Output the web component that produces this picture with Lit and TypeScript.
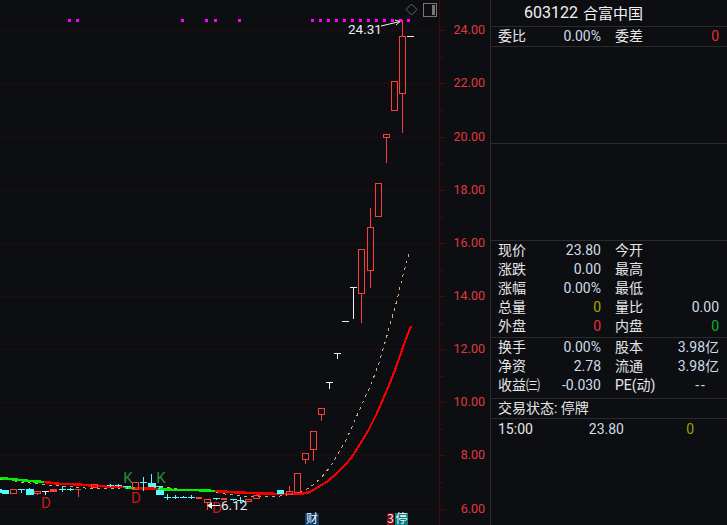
import { LitElement, html, svg, css } from "lit";
import { customElement } from "lit/decorators.js";

type C = [number, number, number, number, number?, number?];
const RED: C[] = [
  [399, 405, 36, 93, 20, 133], [391, 397, 81, 110], [383, 389, 134, 137, 134, 163],
  [375, 381, 183, 216], [367, 373, 227, 270, 208, 288], [358, 364, 249, 293, 249, 323],
  [318, 324, 408, 414, 408, 421], [310, 316, 431, 449, 431, 461], [302, 308, 453, 459, 453, 464],
  [294, 300, 473, 492], [286, 292, 491, 494, 486, 494], [253, 259, 495, 498], [245, 251, 499, 501],
  [204, 210, 499, 502, 499, 510], [132, 138, 482, 489], [91, 97, 484, 487], [10, 16, 489, 493],
  [34, 40, 491, 493, 491, 495],
];
const REDFLAT: number[][] = [[50, 57, 489, 491], [196, 202, 497, 498], [221, 227, 498, 499]];
const REDT: number[][] = [[75, 81, 489, 497]];
const CYANBOX: number[][] = [[0, 1, 489, 492], [2, 8, 490, 493], [26, 33, 489, 494], [148, 155, 483, 486], [156, 163, 490, 494], [277, 283, 490, 493]];
const CYANSTEM: number[][] = [[29, 488, 495], [151, 474, 483]];
const CYANX: number[][] = [
  [18, 24, 489, 489, 493], [59, 65, 489, 486, 492], [67, 73, 489, 488, 491], [107, 113, 485, 484, 487],
  [115, 121, 485, 484, 487], [123, 130, 486, 486, 489], [140, 146, 482, 477, 491], [156, 162, 486, 486, 489],
  [164, 170, 497, 494, 500], [172, 178, 497, 495, 499], [180, 186, 497, 496, 498], [188, 194, 497, 495, 499],
  [213, 219, 498, 498, 500], [230, 236, 499, 499, 501], [237, 243, 500, 497, 503],
];
const WHITE: number[][] = [[407, 413, 36, 36, 36], [350, 356, 287, 287, 319], [342, 348, 321, 321, 321], [334, 340, 353, 353, 359], [326, 332, 382, 382, 389], [42, 48, 491, 491, 495]];
const DOTS = [68, 76, 181, 205, 214, 238, ...Array.from({ length: 13 }, (_, i) => 311 + i * 8)];
const LEVELS: [string, number][] = [["24.00", 30], ["22.00", 83], ["20.00", 137], ["18.00", 190], ["16.00", 243], ["14.00", 296], ["12.00", 349], ["10.00", 402], ["8.00", 455], ["6.00", 509]];
const G1 = "0,478 10,479 20,480 30,481 44,482";
const R1 = "44,482 60,484 70,484 85,485 100,486 125,487";
const G2 = "125,488 135,488";
const R2 = "135,488 158,489";
const G3 = "158,489 175,490 195,490 215,491";
const R3 = "215,491 230,492 250,493 280,494 300,494 310,492";
const R4 = "310,492 320,486 328,481 337,473 347,463 354,454 360,444 368,431 377,413 387,390 395,370 402,350 407,336 411,326";
const TAN = "0,479 10,480 20,482 30,483 45,485 60,486 85,488 100,489 120,488 130,487 160,487 190,490 213,492 225,494 240,496 260,497 280,496 295,494 307,489 313,485 320,479 330,467 338,454 347,438 355,420 363,402 372,382 380,360 388,332 397,300 403,275 410,251";

@customElement("app-chart")
class AppChart extends LitElement {
  static styles = css`
    :host { display: block; width: 490px; height: 525px; flex: none; }
    svg { display: block; }
    .grid { stroke: #560a0a; stroke-width: 1; stroke-dasharray: 1 3; shape-rendering: crispEdges; }
    .axis { stroke: #4c0808; stroke-width: 1; shape-rendering: crispEdges; }
    .ax { font: 12.5px Roboto, sans-serif; fill: #e03a3a; text-anchor: end; }
    .r { fill: none; stroke: #ff3c3c; stroke-width: 1; shape-rendering: crispEdges; }
    .rf { fill: #ff3c3c; }
    .cf { fill: #4dffff; }
    .cl { stroke: #4dffff; stroke-width: 1; shape-rendering: crispEdges; }
    .wl { stroke: #f0f0f0; stroke-width: 1; shape-rendering: crispEdges; }
    .rl { stroke: #ff3c3c; stroke-width: 1; shape-rendering: crispEdges; }
    .ma { fill: none; stroke-width: 2.6; shape-rendering: crispEdges; stroke-linejoin: round; }
    .rise { stroke-width: 2.1; }
    .red { stroke: #f40000; }
    .green { stroke: #00f000; }
    .tan { fill: none; stroke: #d8ac70; stroke-width: 1; stroke-dasharray: 3 4; shape-rendering: crispEdges; }
    .dot { fill: #ff00ff; }
    .k { font: 15px Roboto, sans-serif; fill: #2a8a3a; text-anchor: middle; }
    .d { font: 15px Roboto, sans-serif; fill: #c81818; text-anchor: middle; }
    .lbl { font: 13.5px Roboto, sans-serif; fill: #e4ecf4; }
    .arrow { stroke: #f4f4f4; stroke-width: 1; fill: none; }
    .arrowhead { fill: #f4f4f4; }
    .tool { fill: none; stroke: #777; stroke-width: 1; shape-rendering: crispEdges; }
    .toolf { fill: #777; }
    .diamond { fill: none; stroke: #666; stroke-width: 1; }
    .mark { font: 12px "Noto Sans CJK SC", sans-serif; fill: #f0f4f8; text-anchor: middle; }
    .navy { fill: #0b3a66; }
    .maroon { fill: #7a0c14; }
    .teal { fill: #0a7f80; }
  `;
  render() {
    return html`<svg width="490" height="525" viewBox="0 0 490 525">
      ${LEVELS.map(([t, y]) => svg`
        <line class="grid" x1="0" x2="436" y1=${y + 0.5} y2=${y + 0.5}></line>
        <line class="axis" x1="439" x2="446" y1=${y + 0.5} y2=${y + 0.5}></line>
        <line class="axis" x1="439" x2="443" y1=${y + 27} y2=${y + 27}></line>
        <text class="ax" x="485" y=${y + 4}>${t}</text>`)}
      <line class="axis" x1="439.5" x2="439.5" y1="0" y2="525"></line>
      ${DOTS.map((x) => svg`<rect class="dot" x=${x} y="19" width="3" height="3"></rect>`)}
      <polyline class="tan" points=${TAN}></polyline>
      <polyline class="ma green" points=${G1}></polyline>
      <polyline class="ma red" points=${R1}></polyline>
      <polyline class="ma green" points=${G2}></polyline>
      <polyline class="ma red" points=${R2}></polyline>
      <polyline class="ma green" points=${G3}></polyline>
      <polyline class="ma red" points=${R3}></polyline>
      <polyline class="ma rise red" points=${R4}></polyline>
      ${RED.map(([a, b, t, u, wt, wb]) => {
        const m = (a + b) / 2;
        const cx = Math.floor(m) + 0.5;
        return svg`<rect class="r" x=${a + 0.5} y=${t + 0.5} width=${b - a} height=${u - t}></rect>
          ${wt !== undefined && wb !== undefined && wb > u ? svg`<line class="rl" x1=${cx} x2=${cx} y1=${u} y2=${wb}></line>` : ""}
          ${wt !== undefined && wt < t ? svg`<line class="rl" x1=${cx} x2=${cx} y1=${wt} y2=${t}></line>` : ""}`;
      })}
      ${REDFLAT.map(([a, b, t, u]) => svg`<rect class="rf" x=${a} y=${t} width=${b - a} height=${u - t + 1}></rect>`)}
      ${REDT.map(([a, b, t, u]) => svg`<line class="rl" x1=${a} x2=${b} y1=${t + 0.5} y2=${t + 0.5}></line><line class="rl" x1=${(a + b) / 2 + 0.5} x2=${(a + b) / 2 + 0.5} y1=${t} y2=${u}></line>`)}
      ${CYANBOX.map(([a, b, t, u]) => svg`<rect class="cf" x=${a} y=${t} width=${b - a + 1} height=${u - t + 1}></rect>`)}
      ${CYANSTEM.map(([x, t, u]) => svg`<line class="cl" x1=${x + 0.5} x2=${x + 0.5} y1=${t} y2=${u}></line>`)}
      ${CYANX.map(([a, b, y, t, u]) => svg`<line class="cl" x1=${a} x2=${b + 1} y1=${y + 0.5} y2=${y + 0.5}></line><line class="cl" x1=${(a + b) / 2 + 0.5} x2=${(a + b) / 2 + 0.5} y1=${t} y2=${u}></line>`)}
      ${WHITE.map(([a, b, y, t, u]) => svg`<line class="wl" x1=${a} x2=${b + 1} y1=${y + 0.5} y2=${y + 0.5}></line>${u > t ? svg`<line class="wl" x1=${(a + b) / 2 + 0.5} x2=${(a + b) / 2 + 0.5} y1=${t} y2=${u}></line>` : ""}`)}
      <text class="k" x="128" y="483">K</text>
      <text class="k" x="161" y="483">K</text>
      <text class="d" x="46" y="508">D</text>
      <text class="d" x="136" y="503">D</text>
      <text class="d" x="217" y="513">D</text>
      <text class="lbl" x="221" y="510">6.12</text>
      <line class="arrow" x1="210" x2="220" y1="505.5" y2="505.5"></line>
      <polygon class="arrowhead" points="207,505.5 212,502 212,509"></polygon>
      <text class="lbl" x="348" y="34">24.31</text>
      <polyline class="arrow" points="381,26 400,21.5"></polyline>
      <polyline class="arrow" points="395,20 400,21.5 396,25"></polyline>
      <polygon class="diamond" points="411.5,4 417,9.5 411.5,15 406,9.5"></polygon>
      <rect class="tool" x="423.5" y="3.5" width="13" height="13"></rect>
      <rect class="toolf" x="432" y="5" width="3" height="10"></rect>
      <rect class="navy" x="305" y="513" width="14" height="12"></rect>
      <text class="mark" x="312" y="523">财</text>
      <rect class="maroon" x="387" y="513" width="7" height="12"></rect>
      <text class="mark" x="390.5" y="523">3</text>
      <rect class="teal" x="395" y="513" width="13" height="12"></rect>
      <text class="mark" x="401.5" y="523">停</text>
    </svg>`;
  }
}

@customElement("app-root")
class AppRoot extends LitElement {
  static styles = css`
    :host { display: flex; width: 727px; height: 525px; background: #0d0e12; overflow: hidden; font: 14px Roboto, "Noto Sans CJK SC", sans-serif; color: #e6e6e6; }
    .panel { flex: 1; border-left: 1px solid #2b2b2e; display: flex; flex-direction: column; min-width: 0; }
    .sec { border-bottom: 1px solid #2b2b2e; flex: none; }
    .head { height: 24px; padding-bottom: 2px; display: flex; align-items: center; padding-left: 33px; gap: 5px; font-size: 15px; color: #f2f2f2; }
    .code { font-size: 16px; }
    .one { height: 19px; }
    .blank { height: 96px; }
    .five { height: 96px; }
    .three { height: 60px; }
    .status { height: 19px; padding-left: 7px; line-height: 19px; }
    .row { display: grid; grid-template-columns: 103px 104px; column-gap: 14px; padding-left: 7px; height: 19px; line-height: 19px; }
    .cell { display: flex; justify-content: space-between; white-space: nowrap; }
    .val { color: #cfdcea; }
    .dash { padding-right: 12px; letter-spacing: 2px; }
    .redv { color: #e83030; }
    .greenv { color: #10b030; }
    .yel { color: #a8a800; }
    .tick { display: grid; grid-template-columns: 126px 70px; padding: 1px 0 0 7px; height: 19px; line-height: 19px; }
    .tcell { display: flex; justify-content: space-between; }
    .tzero { text-align: right; color: #90a800; }
  `;
  private row(a: string, b: string, c: string, d: string, bc = "val", dc = "val") {
    return html`<div class="row">
      <div class="cell"><span>${a}</span><span class=${bc}>${b}</span></div>
      <div class="cell"><span>${c}</span><span class=${dc}>${d}</span></div>
    </div>`;
  }
  render() {
    return html`<app-chart></app-chart>
      <div class="panel">
        <div class="sec head"><span class="code">603122</span><span>合富中国</span></div>
        <div class="sec one">${this.row("委比", "0.00%", "委差", "0", "val", "redv")}</div>
        <div class="sec blank"></div>
        <div class="sec blank"></div>
        <div class="sec five">
          ${this.row("现价", "23.80", "今开", "")}
          ${this.row("涨跌", "0.00", "最高", "")}
          ${this.row("涨幅", "0.00%", "最低", "")}
          ${this.row("总量", "0", "量比", "0.00", "yel")}
          ${this.row("外盘", "0", "内盘", "0", "redv", "greenv")}
        </div>
        <div class="sec three">
          ${this.row("换手", "0.00%", "股本", "3.98亿")}
          ${this.row("净资", "2.78", "流通", "3.98亿")}
          ${this.row("收益㈢", "-0.030", "PE(动)", "--", "val", "val dash")}
        </div>
        <div class="sec status">交易状态: 停牌</div>
        <div class="tick">
          <div class="tcell"><span>15:00</span><span class="val">23.80</span></div>
          <div class="tzero">0</div>
        </div>
      </div>`;
  }
}
